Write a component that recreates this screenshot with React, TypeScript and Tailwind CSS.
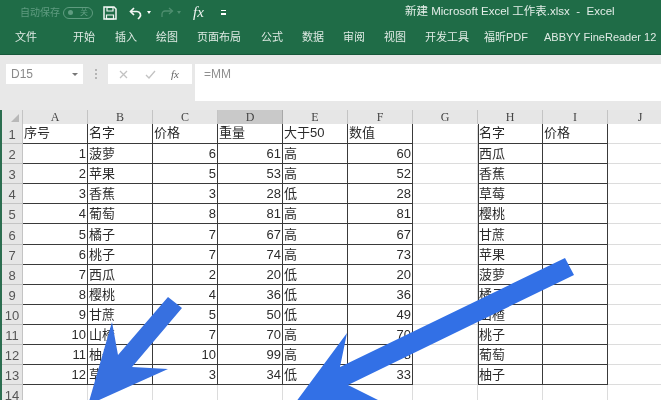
import React from 'react'

const font = { fontFamily: '"Liberation Sans", "Noto Sans CJK SC", sans-serif' }

const tabs = [
	{ label: '文件', w: 'w-[58px]' },
	{ label: '开始', w: 'w-[42px]' },
	{ label: '插入', w: 'w-[41px]' },
	{ label: '绘图', w: 'w-[41px]' },
	{ label: '页面布局', w: 'w-[64px]' },
	{ label: '公式', w: 'w-[41px]' },
	{ label: '数据', w: 'w-[41px]' },
	{ label: '审阅', w: 'w-[41px]' },
	{ label: '视图', w: 'w-[41px]' },
	{ label: '开发工具', w: 'w-[59px]' },
	{ label: '福昕PDF', w: 'w-[60px]' },
	{ label: 'ABBYY FineReader 12', w: 'w-[119px]' },
	{ label: 'ACR', w: 'w-[30px]' }
]

const columns = ['A', 'B', 'C', 'D', 'E', 'F', 'G', 'H', 'I', 'J']

const rows = [
	['1', '菠萝', '6', '61', '高', '60', '西瓜'],
	['2', '苹果', '5', '53', '高', '52', '香蕉'],
	['3', '香蕉', '3', '28', '低', '28', '草莓'],
	['4', '葡萄', '8', '81', '高', '81', '樱桃'],
	['5', '橘子', '7', '67', '高', '67', '甘蔗'],
	['6', '桃子', '7', '74', '高', '73', '苹果'],
	['7', '西瓜', '2', '20', '低', '20', '菠萝'],
	['8', '樱桃', '4', '36', '低', '36', '橘子'],
	['9', '甘蔗', '5', '50', '低', '49', '山楂'],
	['10', '山楂', '7', '70', '高', '70', '桃子'],
	['11', '柚子', '10', '99', '高', '98', '葡萄'],
	['12', '草莓', '3', '34', '低', '33', '柚子']
]

const RowHead = ({ n }: { n: number }) => (
	<div className="h-[20.1px] w-[21px] shrink-0 bg-[#e6e6e6] border-b border-r border-[#c4c4c4] flex items-end justify-center text-[13px] leading-[17px] text-[#555]">
		{n}
	</div>
)

// ink = part of one of the two bordered tables
const Cell = ({ text, ink, right, top }: { text?: string; ink?: boolean; right?: boolean; top?: boolean }) => (
	<div
		className={`h-[20.1px] w-[65px] shrink-0 border-b border-r flex items-center px-[1px] text-[13px] leading-none text-[#2b2b2b] ${
			ink ? 'border-[#3a3a3a]' : 'border-[#dcdcdc]'
		} ${right ? 'justify-end font-mono-digit' : 'justify-start'} ${top ? 'pb-[3px]' : ''}`}
	>
		{text}
	</div>
)

const App = () => {
	return (
		<div className="relative w-[661px] h-[400px] overflow-hidden bg-white blur-[0.5px]" style={font}>
			{/* ribbon */}
			<div className="h-[55px] bg-[#1f6c47] border-b border-[#17583a] text-white">
				<div className="h-[25px] flex items-center relative">
					<span className="ml-[20px] w-[42px] text-[10px] text-[#5f9c80]">自动保存</span>
					<div className="ml-[1px] w-[30px] h-[12px] rounded-full border border-[#5f9c80] flex items-center justify-between px-[4px] text-[8px] leading-none text-[#5f9c80]">
						<span className="w-[5px] h-[5px] rounded-full bg-[#5f9c80]" />
						<span>关</span>
					</div>
					<svg className="ml-[10px]" width="14" height="14" viewBox="0 0 14 14">
						<path d="M1 1h10l2 2v10H1z" fill="none" stroke="#f1f6f3" strokeWidth="1.5" />
						<path d="M4 1.5h6v3.5H4zM3.5 9h7v4h-7z" fill="none" stroke="#f1f6f3" strokeWidth="1.2" />
					</svg>
					<svg className="ml-[12px]" width="14" height="14" viewBox="0 0 14 14">
						<path d="M5 2 1.5 5.5 5 9" fill="none" stroke="#f1f6f3" strokeWidth="1.7" />
						<path d="M2 5.5h6a3.5 3.5 0 0 1 2.5 6L9 13" fill="none" stroke="#f1f6f3" strokeWidth="1.7" />
					</svg>
					<span className="ml-[4px] w-0 h-0 border-x-[2.5px] border-x-transparent border-t-[3px] border-t-white" />
					<svg className="ml-[9px]" width="14" height="12" viewBox="0 0 14 12">
						<path d="M9 1l3.5 3L9 7" fill="none" stroke="#4f8f70" strokeWidth="1.3" />
						<path d="M12 4H5a3 3 0 0 0-3 3v3" fill="none" stroke="#4f8f70" strokeWidth="1.3" />
					</svg>
					<span className="ml-[3px] w-0 h-0 border-x-[2.5px] border-x-transparent border-t-[3px] border-t-[#4f8f70]" />
					<span className="ml-[12px] text-[15px] italic text-[#f1f6f3]" style={{ fontFamily: '"Liberation Serif", serif' }}>
						fx
					</span>
					<span className="ml-[17px] flex flex-col gap-[2px]">
						<span className="w-[5px] h-[1px] bg-white" />
						<span className="w-[5px] h-[2px] bg-white" />
					</span>
					<span className="absolute left-[405px] top-[3px] text-[11.5px] whitespace-nowrap text-[#e4eee9]">新建 Microsoft Excel 工作表.xlsx&nbsp; -&nbsp; Excel</span>
				</div>
				<div className="h-[24px] flex items-center pl-[15px] text-[11px] text-[#dfeae4] whitespace-nowrap">
					{tabs.map((tab) => (
						<span key={tab.label} className={`${tab.w} shrink-0`}>
							{tab.label}
						</span>
					))}
				</div>
			</div>

			{/* formula bar */}
			<div className="h-[55px] bg-[#e8e8e8] flex items-start pt-[9px] pl-[6px]">
				<div className="w-[77px] h-[20px] bg-white flex items-center justify-between pl-[5px] pr-[5px] text-[12px] text-[#8a8a8a]">
					<span>D15</span>
					<span className="w-0 h-0 border-x-[3px] border-x-transparent border-t-[3px] border-t-[#777]" />
				</div>
				<div className="w-[25px] h-[20px] flex flex-col items-center justify-center gap-[2px]">
					<span className="w-[2px] h-[2px] bg-[#b5b5b5]" />
					<span className="w-[2px] h-[2px] bg-[#b5b5b5]" />
					<span className="w-[2px] h-[2px] bg-[#b5b5b5]" />
				</div>
				<div className="w-[84px] h-[20px] bg-white flex items-center pl-[11px]">
					<svg width="9" height="9" viewBox="0 0 9 9">
						<path d="M1 1l7 7M8 1 1 8" stroke="#c2c2c2" strokeWidth="1.3" />
					</svg>
					<svg className="ml-[17px]" width="11" height="9" viewBox="0 0 11 9">
						<path d="M1 5l3 3 6-7" fill="none" stroke="#c2c2c2" strokeWidth="1.3" />
					</svg>
					<span className="ml-[15px] text-[11px] italic text-[#666]" style={{ fontFamily: '"Liberation Serif", serif' }}>
						fx
					</span>
				</div>
				<div className="ml-[3px] flex-1 h-[37px] bg-white pl-[9px] pt-[3px] text-[12px] leading-[15px] text-[#8f8f8f]">=MM</div>
			</div>

			{/* sheet */}
			<div className="flex border-l-2 border-[#2c6e50]">
				<div className="relative h-[14px] w-[21px] shrink-0 bg-[#e6e6e6] border-r border-[#c4c4c4]">
					<span className="absolute right-[3px] bottom-[2px] w-0 h-0 border-l-[8px] border-l-transparent border-b-[8px] border-b-[#b8b8b8]" />
				</div>
				{columns.map((col) => (
					<div
						key={col}
						className={`h-[14px] w-[65px] shrink-0 flex items-center justify-center border-r text-[12px] leading-none text-[#444] ${
							col === 'D' ? 'bg-[#c9c9c9] border-[#a8a8a8]' : 'bg-[#e6e6e6] border-[#c4c4c4]'
						}`}
						style={{ fontFamily: '"Liberation Serif", serif' }}
					>
						{col}
					</div>
				))}
			</div>
			<div className="border-l-2 border-[#2c6e50]">
				<div className="flex border-t border-[#3a3a3a] -mt-[1px] ml-[21px] w-[390px]" />
				<div className="flex">
					<RowHead n={1} />
					<Cell text="序号" ink top />
					<Cell text="名字" ink top />
					<Cell text="价格" ink top />
					<Cell text="重量" ink top />
					<Cell text="大于50" ink top />
					<Cell text="数值" ink top />
					<Cell />
					<Cell text="名字" ink top />
					<Cell text="价格" ink top />
					<Cell />
				</div>
				{rows.map((row, i) => (
					<div key={row[0]} className="flex">
						<RowHead n={i + 2} />
						<Cell text={row[0]} ink right />
						<Cell text={row[1]} ink />
						<Cell text={row[2]} ink right />
						<Cell text={row[3]} ink right />
						<Cell text={row[4]} ink />
						<Cell text={row[5]} ink right />
						<Cell />
						<Cell text={row[6]} ink />
						<Cell ink />
						<Cell />
					</div>
				))}
				<div className="flex">
					<RowHead n={14} />
					{columns.map((col) => (
						<Cell key={col} />
					))}
				</div>
			</div>

			{/* vertical edges of the two tables sit left of column A and column H */}
			<div className="absolute left-[478px] top-[124px] w-[1px] h-[261px] bg-[#3a3a3a]" />
			<div className="absolute left-[413px] top-[124px] w-[65px] h-[1px] bg-white" />

			{/* the blue arrows drawn on top of the screenshot */}
			<svg className="absolute inset-0" width="661" height="400" viewBox="0 0 661 400">
				<polygon points="168,297 182,308 132,367 168,369 88,405 112,322 118,355" fill="#3770e0" />
				<polygon points="565,258 574,275 348,385 378,400 378,410 290,410 347,333 340,367" fill="#3270e6" />
			</svg>
		</div>
	)
}

export default App
